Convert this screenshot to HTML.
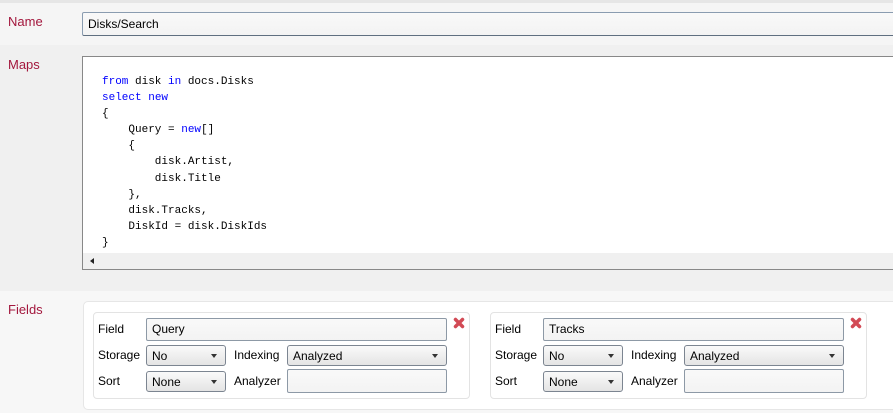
<!DOCTYPE html>
<html><head><style>
*{margin:0;padding:0;box-sizing:border-box}
body{width:893px;height:413px;background:#f0f0f0;font-family:"Liberation Sans",sans-serif;font-size:12px;color:#000;position:relative;overflow:hidden}
.a{position:absolute}
.lbl{color:#a3173d;font-size:13px}
.inp{position:absolute;background:linear-gradient(#f9f9f9,#f3f3f3);border:1px solid #8d99a6;border-radius:2px;padding:3px 0 0 5px;font-size:12px}
.sel{position:absolute;background:linear-gradient(#fafafa,#e4e4e4);border:1px solid #7c8591;border-radius:3px;padding:3px 0 0 5px;font-size:12px}
.sel:after{content:"";position:absolute;right:8px;top:8px;border-left:3.5px solid transparent;border-right:3.5px solid transparent;border-top:4px solid #333}
.card{position:absolute;background:#fff;border:1px solid #e3e3e3;border-radius:4px}
.t{position:absolute;font-size:12px}
pre{position:absolute;left:102px;top:74px;font-family:"Liberation Mono",monospace;font-size:11px;line-height:16.1px;color:#000}
.k{color:#0000ff}
.x{position:absolute;width:12px;height:12px}
</style></head><body>
<div class="a" style="left:0;top:0;width:893px;height:3px;background:#e6e6e6"></div>
<div class="a" style="left:0;top:3px;width:893px;height:42px;background:#f5f5f5"></div>
<div class="a lbl" style="left:8px;top:14px">Name</div>
<div class="inp" style="left:82px;top:12px;width:820px;height:24px;border-color:#8a9cb0 #8a9cb0 #5f6f80;padding-top:4px">Disks/Search</div>
<div class="a" style="left:0;top:46px;width:893px;height:245px;background:#f0f0f0"></div>
<div class="a lbl" style="left:8px;top:57px">Maps</div>
<div class="a" style="left:82px;top:56px;width:820px;height:214px;background:#fff;border:1px solid #888"></div>
<div class="a" style="left:83px;top:253px;width:820px;height:16px;background:#f0f0f0"></div>
<div class="a" style="left:90px;top:258px;border-top:3px solid transparent;border-bottom:3px solid transparent;border-right:4px solid #222"></div>
<pre><span class="k">from</span> disk <span class="k">in</span> docs.Disks
<span class="k">select</span> <span class="k">new</span>
{
    Query = <span class="k">new</span>[]
    {
        disk.Artist,
        disk.Title
    },
    disk.Tracks,
    DiskId = disk.DiskIds
}</pre>
<div class="a" style="left:0;top:291px;width:893px;height:122px;background:#f7f7f7"></div>
<div class="a lbl" style="left:8px;top:302px">Fields</div>
<div class="a" style="left:83px;top:301px;width:820px;height:109px;background:#fff;border:1px solid #e6e6e6;border-radius:5px"></div>

<div class="card" style="left:93px;top:312px;width:377px;height:87px"></div>
<div class="t" style="left:98px;top:322px">Field</div>
<div class="inp" style="left:146px;top:318px;width:301px;height:23px">Query</div>
<svg class="x" style="left:453px;top:317px" viewBox="0 0 12 12"><path d="M2.5 2.5L9.5 9.5M9.5 2.5L2.5 9.5" stroke="#d24a55" stroke-width="3.5" stroke-linecap="round"/></svg>
<div class="t" style="left:98px;top:348px">Storage</div>
<div class="sel" style="left:146px;top:345px;width:80px;height:21px">No</div>
<div class="t" style="left:234px;top:348px">Indexing</div>
<div class="sel" style="left:287px;top:345px;width:160px;height:21px">Analyzed</div>
<div class="t" style="left:98px;top:374px">Sort</div>
<div class="sel" style="left:146px;top:371px;width:80px;height:21px">None</div>
<div class="t" style="left:234px;top:374px">Analyzer</div>
<div class="inp" style="left:287px;top:369px;width:160px;height:24px"></div>

<div class="card" style="left:490px;top:312px;width:377px;height:87px"></div>
<div class="t" style="left:495px;top:322px">Field</div>
<div class="inp" style="left:543px;top:318px;width:301px;height:23px">Tracks</div>
<svg class="x" style="left:850px;top:317px" viewBox="0 0 12 12"><path d="M2.5 2.5L9.5 9.5M9.5 2.5L2.5 9.5" stroke="#d24a55" stroke-width="3.5" stroke-linecap="round"/></svg>
<div class="t" style="left:495px;top:348px">Storage</div>
<div class="sel" style="left:543px;top:345px;width:80px;height:21px">No</div>
<div class="t" style="left:631px;top:348px">Indexing</div>
<div class="sel" style="left:684px;top:345px;width:160px;height:21px">Analyzed</div>
<div class="t" style="left:495px;top:374px">Sort</div>
<div class="sel" style="left:543px;top:371px;width:80px;height:21px">None</div>
<div class="t" style="left:631px;top:374px">Analyzer</div>
<div class="inp" style="left:684px;top:369px;width:160px;height:24px"></div>
</body></html>
